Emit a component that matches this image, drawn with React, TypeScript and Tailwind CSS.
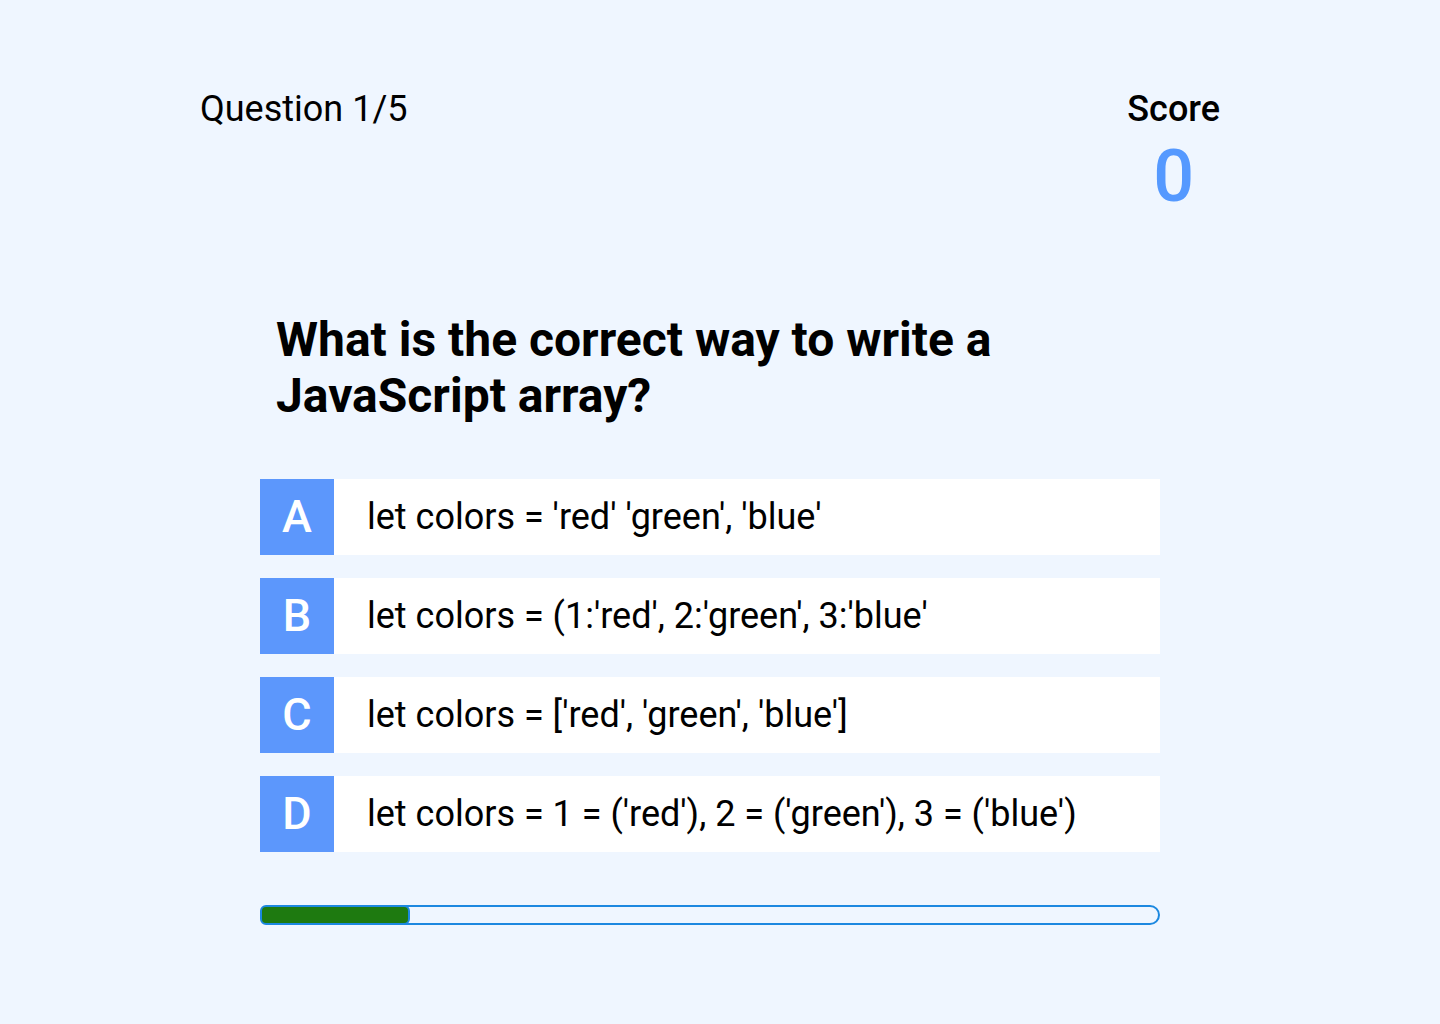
import React from "react";

const options = [
  { letter: "A", text: "let colors = 'red' 'green', 'blue'" },
  { letter: "B", text: "let colors = (1:'red', 2:'green', 3:'blue'" },
  { letter: "C", text: "let colors = ['red', 'green', 'blue']" },
  { letter: "D", text: "let colors = 1 = ('red'), 2 = ('green'), 3 = ('blue')" },
];

export default function App() {
  return (
    <div
      className="w-[1440px] h-[1024px] bg-[#eff6ff] text-black pl-[200px] pr-[220px] pt-[88px]"
      style={{ fontFamily: "Roboto, 'Noto Sans', sans-serif" }}
    >
      <div className="flex justify-between items-start">
        <div className="text-[36px] leading-[42px]">Question 1/5</div>
        <div className="flex flex-col items-center">
          <div className="text-[36px] leading-[42px] font-medium">Score</div>
          <div className="text-[72px] leading-[72px] font-medium text-[#5599ff] mt-[11px]">0</div>
        </div>
      </div>

      <h1 className="mt-[99px] pl-[76px] text-[48px] leading-[56px] font-bold w-[900px]">
        What is the correct way to write a JavaScript array?
      </h1>

      <div className="mx-[60px] mt-[55px] flex flex-col gap-[23px]">
        {options.map((o) => (
          <div key={o.letter} className="flex h-[76px] bg-white items-stretch">
            <div className="w-[74px] bg-[#5c97fc] text-white flex items-center justify-center text-[45px] font-medium">
              {o.letter}
            </div>
            <div className="flex items-center pl-[33px] text-[36px] leading-[42px]">{o.text}</div>
          </div>
        ))}
      </div>

      <div className="mx-[60px] mt-[53px] relative h-[20px] rounded-full border-2 border-[#1c88e0]">
        <div className="absolute -top-[2px] -left-[2px] h-[20px] w-[150px] rounded-md border-2 border-[#1c88e0] bg-[#1e7a10]" />
      </div>
    </div>
  );
}
